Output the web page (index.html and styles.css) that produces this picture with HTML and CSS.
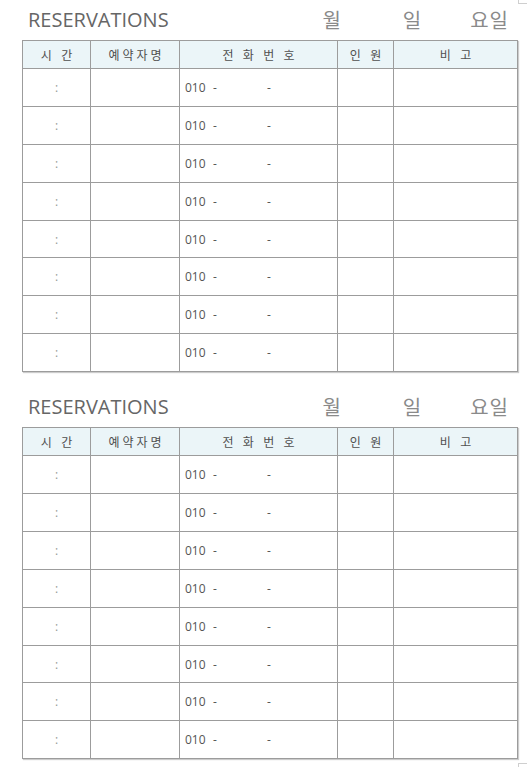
FILE: index.html
```html
<!DOCTYPE html>
<html lang="ko">
<head>
<meta charset="utf-8">
<link rel="stylesheet" href="styles.css">
</head>
<body>
<div class="page">
  <section class="sheet">
    <div class="title-row">
      <h1 class="title">RESERVATIONS</h1>
      <div class="date"><span class="d-m">월</span><span class="d-d">일</span><span class="d-w">요일</span></div>
    </div>
    <table class="res">
      <colgroup><col class="c1"><col class="c2"><col class="c3"><col class="c4"><col class="c5"></colgroup>
      <thead><tr><th>시 간</th><th>예약자명</th><th>전 화 번 호</th><th>인 원</th><th>비 고</th></tr></thead>
      <tbody>
        <tr><td class="time">:</td><td></td><td class="tel"><span class="pre">010</span><span class="dash">-</span><span>-</span></td><td></td><td></td></tr>
        <tr><td class="time">:</td><td></td><td class="tel"><span class="pre">010</span><span class="dash">-</span><span>-</span></td><td></td><td></td></tr>
        <tr><td class="time">:</td><td></td><td class="tel"><span class="pre">010</span><span class="dash">-</span><span>-</span></td><td></td><td></td></tr>
        <tr><td class="time">:</td><td></td><td class="tel"><span class="pre">010</span><span class="dash">-</span><span>-</span></td><td></td><td></td></tr>
        <tr><td class="time">:</td><td></td><td class="tel"><span class="pre">010</span><span class="dash">-</span><span>-</span></td><td></td><td></td></tr>
        <tr><td class="time">:</td><td></td><td class="tel"><span class="pre">010</span><span class="dash">-</span><span>-</span></td><td></td><td></td></tr>
        <tr><td class="time">:</td><td></td><td class="tel"><span class="pre">010</span><span class="dash">-</span><span>-</span></td><td></td><td></td></tr>
        <tr><td class="time">:</td><td></td><td class="tel"><span class="pre">010</span><span class="dash">-</span><span>-</span></td><td></td><td></td></tr>
      </tbody>
    </table>
  </section>
  <section class="sheet second">
    <div class="title-row">
      <h1 class="title">RESERVATIONS</h1>
      <div class="date"><span class="d-m">월</span><span class="d-d">일</span><span class="d-w">요일</span></div>
    </div>
    <table class="res">
      <colgroup><col class="c1"><col class="c2"><col class="c3"><col class="c4"><col class="c5"></colgroup>
      <thead><tr><th>시 간</th><th>예약자명</th><th>전 화 번 호</th><th>인 원</th><th>비 고</th></tr></thead>
      <tbody>
        <tr><td class="time">:</td><td></td><td class="tel"><span class="pre">010</span><span class="dash">-</span><span>-</span></td><td></td><td></td></tr>
        <tr><td class="time">:</td><td></td><td class="tel"><span class="pre">010</span><span class="dash">-</span><span>-</span></td><td></td><td></td></tr>
        <tr><td class="time">:</td><td></td><td class="tel"><span class="pre">010</span><span class="dash">-</span><span>-</span></td><td></td><td></td></tr>
        <tr><td class="time">:</td><td></td><td class="tel"><span class="pre">010</span><span class="dash">-</span><span>-</span></td><td></td><td></td></tr>
        <tr><td class="time">:</td><td></td><td class="tel"><span class="pre">010</span><span class="dash">-</span><span>-</span></td><td></td><td></td></tr>
        <tr><td class="time">:</td><td></td><td class="tel"><span class="pre">010</span><span class="dash">-</span><span>-</span></td><td></td><td></td></tr>
        <tr><td class="time">:</td><td></td><td class="tel"><span class="pre">010</span><span class="dash">-</span><span>-</span></td><td></td><td></td></tr>
        <tr><td class="time">:</td><td></td><td class="tel"><span class="pre">010</span><span class="dash">-</span><span>-</span></td><td></td><td></td></tr>
      </tbody>
    </table>
  </section>
  <div class="crop crop-top"></div>
  <div class="crop crop-bottom"></div>
</div>
</body>
</html>
```

FILE: styles.css
```css
html, body {
  margin: 0;
  padding: 0;
  background: #ffffff;
}
body {
  font-family: "Open Sans", "Noto Sans CJK KR", sans-serif;
  color: #555;
}
.page {
  position: relative;
  width: 527px;
  height: 767px;
  overflow: hidden;
}
.sheet {
  padding-left: 22px;
}
.sheet.second {
  margin-top: 15px;
}
.title-row {
  height: 40px;
  display: flex;
  align-items: center;
  justify-content: space-between;
  width: 494px;
}
.title {
  margin: 0 0 0 6px;
  font-family: "Open Sans", sans-serif;
  font-weight: 400;
  font-size: 20px;
  color: #666;
  letter-spacing: 0;
  line-height: 1;
}
.date {
  display: flex;
  font-family: "Noto Sans CJK KR", sans-serif;
  font-size: 20px;
  color: #8a8a8a;
  line-height: 1;
  padding-right: 7px;
}
.d-m { margin-right: 62px; }
.d-d { margin-right: 49px; }
.d-w { letter-spacing: 1px; }
.res {
  border-collapse: collapse;
  table-layout: fixed;
  width: 495px;
  box-shadow: 1px 1px 1px rgba(0,0,0,0.2);
}
.c1 { width: 68px; }
.c2 { width: 89px; }
.c3 { width: 158px; }
.c4 { width: 56px; }
.c5 { width: 124px; }
.res th, .res td {
  border: 1px solid #9c9c9c;
  padding: 0;
}
.res th {
  height: 27px;
  background: #ebf5f8;
  font-family: "Noto Sans CJK KR", sans-serif;
  font-weight: 400;
  font-size: 12px;
  letter-spacing: 3px;
  text-indent: 3px;
  color: #4f4f4f;
  text-align: center;
}
.res td {
  height: 36.9px;
  font-size: 12px;
  color: #555;
}
.res td.time {
  text-align: center;
  color: #999;
}
.res td.tel {
  padding-left: 5px;
  color: #555;
}
.pre {
  display: inline-block;
  width: 28px;
}
.dash {
  display: inline-block;
  width: 54px;
}
.crop {
  position: absolute;
  width: 9px;
  height: 3px;
  left: 518px;
  border-left: 1px solid #cfcfcf;
}
.crop-top {
  top: 0;
  border-bottom: 1px solid #cfcfcf;
}
.crop-bottom {
  top: 763px;
  border-top: 1px solid #cfcfcf;
}
```
